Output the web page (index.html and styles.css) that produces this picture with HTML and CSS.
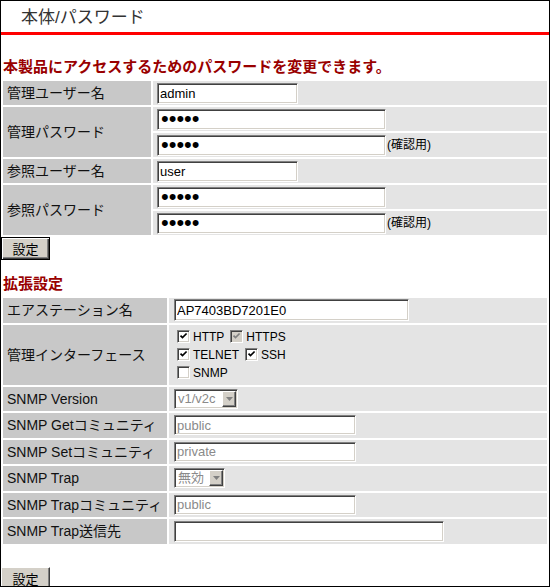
FILE: index.html
```html
<!DOCTYPE html>
<html lang="ja">
<head>
<meta charset="utf-8">
<title>本体/パスワード</title>
<link rel="stylesheet" href="styles.css">
</head>
<body>
<header class="title-bar"><h1 class="title">本体/パスワード</h1></header>
<form class="settings" onsubmit="return false">
  <h2 class="section-title section-title--first">本製品にアクセスするためのパスワードを変更できます。</h2>
  <table class="form-table form-table--account">
    <tr>
      <th>管理ユーザー名</th>
      <td><div class="cell"><input class="field field--short" type="text" value="admin"></div></td>
    </tr>
    <tr>
      <th rowspan="2">管理パスワード</th>
      <td><div class="cell"><input class="field field--pw" type="password" value="admin"></div></td>
    </tr>
    <tr>
      <td><div class="cell"><input class="field field--pw" type="password" value="admin"><span class="note">(確認用)</span></div></td>
    </tr>
    <tr>
      <th>参照ユーザー名</th>
      <td><div class="cell"><input class="field field--short" type="text" value="user"></div></td>
    </tr>
    <tr>
      <th rowspan="2">参照パスワード</th>
      <td><div class="cell"><input class="field field--pw" type="password" value="user1"></div></td>
    </tr>
    <tr>
      <td><div class="cell"><input class="field field--pw" type="password" value="user1"><span class="note">(確認用)</span></div></td>
    </tr>
  </table>
  <button class="btn btn--default" type="submit">設定</button>

  <h2 class="section-title section-title--second">拡張設定</h2>
  <table class="form-table form-table--ext">
    <tr>
      <th>エアステーション名</th>
      <td><div class="cell"><input class="field field--station" type="text" value="AP7403BD7201E0"></div></td>
    </tr>
    <tr class="row-iface">
      <th>管理インターフェース</th>
      <td>
        <div class="opt-line">
          <label class="opt"><span class="cb is-checked"><svg viewBox="0 0 9 9" width="9" height="9"><path d="M1.5 3.6 L3.5 5.6 L7.6 1.5" /></svg></span>HTTP</label>
          <label class="opt"><span class="cb is-checked is-disabled"><svg viewBox="0 0 9 9" width="9" height="9"><path d="M1.5 3.6 L3.5 5.6 L7.6 1.5" /></svg></span>HTTPS</label>
        </div>
        <div class="opt-line">
          <label class="opt"><span class="cb is-checked"><svg viewBox="0 0 9 9" width="9" height="9"><path d="M1.5 3.6 L3.5 5.6 L7.6 1.5" /></svg></span>TELNET</label>
          <label class="opt"><span class="cb is-checked"><svg viewBox="0 0 9 9" width="9" height="9"><path d="M1.5 3.6 L3.5 5.6 L7.6 1.5" /></svg></span>SSH</label>
        </div>
        <div class="opt-line">
          <label class="opt"><span class="cb"></span>SNMP</label>
        </div>
      </td>
    </tr>
    <tr>
      <th>SNMP Version</th>
      <td><div class="cell"><span class="select select--version is-disabled"><span class="select-value">v1/v2c</span><span class="select-arrow"><svg viewBox="0 0 7 4" width="7" height="4"><path d="M0 0 H7 L3.5 4 Z"/></svg></span></span></div></td>
    </tr>
    <tr>
      <th>SNMP Getコミュニティ</th>
      <td><div class="cell"><input class="field field--mid" type="text" value="public" disabled></div></td>
    </tr>
    <tr>
      <th>SNMP Setコミュニティ</th>
      <td><div class="cell"><input class="field field--mid" type="text" value="private" disabled></div></td>
    </tr>
    <tr>
      <th>SNMP Trap</th>
      <td><div class="cell"><span class="select select--trap is-disabled"><span class="select-value">無効</span><span class="select-arrow"><svg viewBox="0 0 7 4" width="7" height="4"><path d="M0 0 H7 L3.5 4 Z"/></svg></span></span></div></td>
    </tr>
    <tr>
      <th>SNMP Trapコミュニティ</th>
      <td><div class="cell"><input class="field field--mid" type="text" value="public" disabled></div></td>
    </tr>
    <tr>
      <th>SNMP Trap送信先</th>
      <td><div class="cell"><input class="field field--wide" type="text" value=""></div></td>
    </tr>
  </table>
  <button class="btn btn--plain" type="submit">設定</button>
</form>
</body>
</html>
```

FILE: styles.css
```css
* {
  box-sizing: border-box;
}

html,
body {
  margin: 0;
  padding: 0;
}

body {
  width: 550px;
  height: 587px;
  border: 1px solid #000;
  overflow: hidden;
  background: #fff;
  color: #111;
  font-family: "Liberation Sans", "Noto Sans CJK JP", sans-serif;
  font-size: 14px;
}

/* ---------- title ---------- */
.title-bar {
  height: 34px;
  padding: 3px 0 0 20px;
  border-bottom: 3px solid #ff0000;
}

.title {
  margin: 0;
  font-size: 17px;
  font-weight: normal;
  line-height: 28px;
  color: #333;
}

/* ---------- section headings ---------- */
.section-title {
  margin: 0 0 3px 2px;
  font-size: 15px;
  font-weight: bold;
  line-height: 18px;
  color: #990000;
}

.section-title--first {
  margin-top: 23px;
}

.section-title--second {
  margin-top: 15px;
}

/* ---------- tables ---------- */
.form-table {
  width: 100%;
  border-collapse: separate;
  border-spacing: 2px;
}

.form-table th {
  background: #c8c8c8;
  font-weight: normal;
  text-align: left;
  vertical-align: middle;
  padding: 0 4px;
  line-height: 18px;
  white-space: nowrap;
}

.form-table td {
  background: #e4e4e4;
  vertical-align: middle;
  padding: 0 4px;
  white-space: nowrap;
}

.form-table--account th {
  width: 148px;
}

.form-table--account tr {
  height: 24px;
}

.form-table--ext th {
  width: 164px;
}

.form-table--ext td {
  padding-left: 5px;
}

.form-table--ext tr {
  height: 24.5px;
}

.form-table--ext tr.row-iface {
  height: 60px;
}

.cell {
  display: flex;
  align-items: center;
}

/* ---------- fields ---------- */
.field {
  margin: 0;
  height: 21px;
  padding: 0 2px;
  border: 1px solid;
  border-color: #808080 #ffffff #ffffff #808080;
  box-shadow: inset 1px 1px 0 #404040, inset -1px -1px 0 #d4d0c8;
  background: #fff;
  color: #000;
  font-family: "Liberation Sans", "Noto Sans CJK JP", sans-serif;
  font-size: 13px;
  outline: none;
}

.field:disabled {
  background: #fff;
  color: #8a8a8a;
}

.field--short {
  width: 141px;
}

.field--pw {
  width: 229px;
  font-size: 22px;
  line-height: 17px;
  padding: 0 1px 0 3px;
}

.field--station {
  width: 235px;
  height: 22px;
}

.field--mid {
  width: 182px;
  height: 20px;
}

.field--wide {
  width: 270px;
}

.note {
  font-size: 12px;
  line-height: 16px;
  color: #000;
  margin-left: 1px;
}

/* ---------- checkboxes ---------- */
.opt-line {
  display: flex;
  align-items: center;
  height: 18px;
}

.opt {
  display: inline-flex;
  align-items: center;
  font-size: 12px;
  line-height: 14px;
  color: #000;
  margin-right: 3px;
}

.cb {
  display: inline-flex;
  align-items: center;
  justify-content: center;
  width: 13px;
  height: 13px;
  margin: 0 3px;
  border: 1px solid;
  border-color: #808080 #ffffff #ffffff #808080;
  box-shadow: inset 1px 1px 0 #404040, inset -1px -1px 0 #d4d0c8;
  background: #fff;
}

.cb svg {
  display: none;
  fill: none;
  stroke: #000;
  stroke-width: 1.7;
}

.cb.is-checked svg {
  display: block;
}

.cb.is-disabled {
  background: #d4d0c8;
}

.cb.is-disabled svg {
  stroke: #808080;
}

/* ---------- select (disabled) ---------- */
.select {
  display: inline-flex;
  height: 20px;
  padding: 1px;
  border: 1px solid;
  border-color: #808080 #ffffff #ffffff #808080;
  box-shadow: inset 1px 1px 0 #404040, inset -1px -1px 0 #d4d0c8;
  background: #fff;
}

.select--version {
  width: 64px;
}

.select--trap {
  width: 51px;
}

.select-value {
  flex: 1;
  padding-left: 2px;
  font-size: 13px;
  line-height: 16px;
  color: #8a8a8a;
}

.select-arrow {
  display: flex;
  align-items: center;
  justify-content: center;
  width: 14px;
  height: 16px;
  background: #d4d0c8;
  border: 1px solid;
  border-color: #ffffff #404040 #404040 #ffffff;
  box-shadow: inset -1px -1px 0 #808080;
}

.select-arrow svg {
  fill: #808080;
}

/* ---------- buttons ---------- */
.btn {
  display: block;
  width: 49px;
  height: 23px;
  margin: 0;
  padding: 0;
  background: #d4d0c8;
  border: 1px solid;
  border-color: #ffffff #404040 #404040 #ffffff;
  box-shadow: inset -1px -1px 0 #808080;
  color: #000;
  font-family: "Noto Sans CJK JP", sans-serif;
  font-size: 13px;
  line-height: 19px;
  cursor: default;
}

.btn--default {
  border-color: #000;
  box-shadow: inset 1px 1px 0 #ffffff, inset -1px -1px 0 #404040, inset -2px -2px 0 #808080;
}

.btn--plain {
  margin-top: 21px;
}
```
